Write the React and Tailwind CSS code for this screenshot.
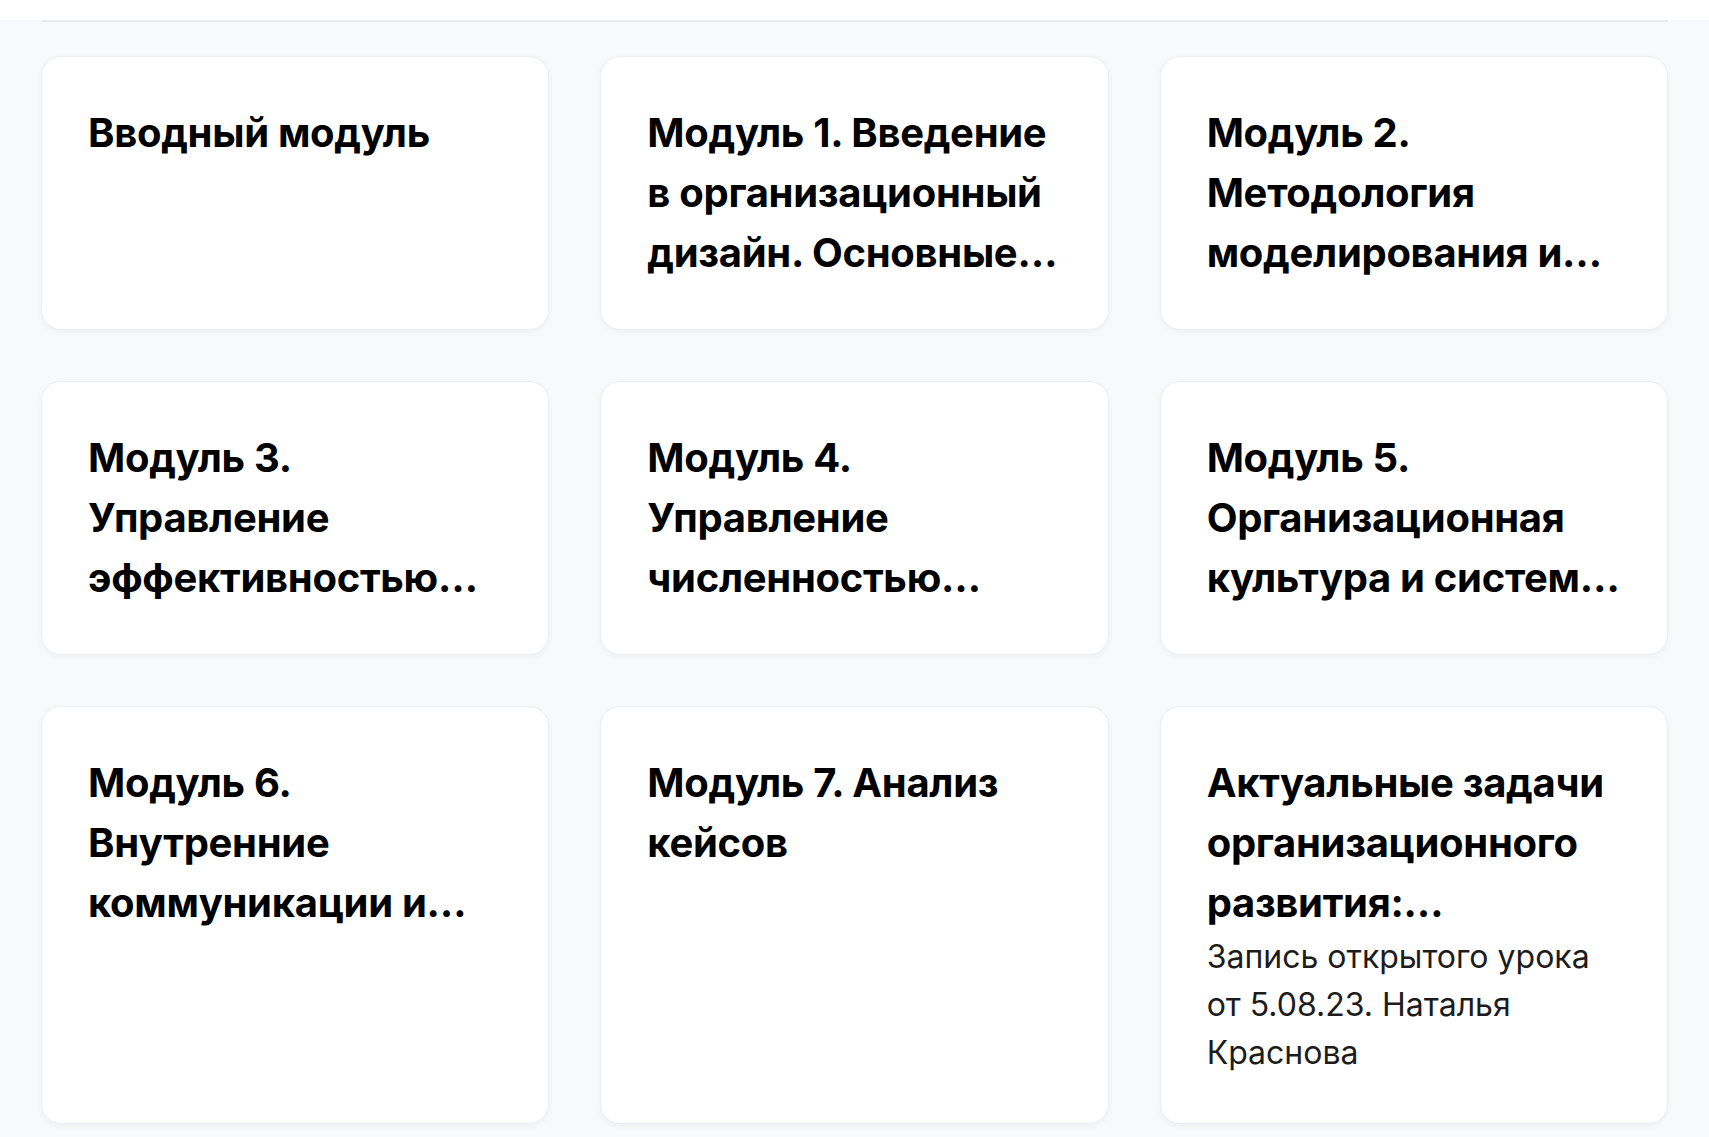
const modules = [
  { title: "Вводный модуль" },
  { title: "Модуль 1. Введение в организационный дизайн. Основные понятия" },
  { title: "Модуль 2. Методология моделирования и проектирования" },
  { title: "Модуль 3. Управление эффективностью организации" },
  { title: "Модуль 4. Управление численностью персонала" },
  { title: "Модуль 5. Организационная культура и система ценностей" },
  { title: "Модуль 6. Внутренние коммуникации и вовлеченность" },
  { title: "Модуль 7. Анализ кейсов" },
  {
    title: "Актуальные задачи организационного развития: практический взгляд",
    subtitle: "Запись открытого урока от 5.08.23. Наталья Краснова",
  },
];

function ModuleCard({ title, subtitle }) {
  return (
    <div className="bg-white rounded-[20px] border border-[#eceef2] shadow-[0_2px_6px_rgba(16,24,40,0.04)] p-[46px] cursor-pointer">
      <h3 className="text-[40px] leading-[60px] font-bold tracking-[-0.3px] text-black line-clamp-3">
        {title}
      </h3>
      {subtitle && (
        <p className="text-[32px] leading-[48px] text-[#1c1c1c]">{subtitle}</p>
      )}
    </div>
  );
}

export default function App() {
  return (
    <div
      className="min-h-screen bg-[#f8f9fb] px-[41px]"
      style={{ fontFamily: "Inter, 'Noto Sans', sans-serif" }}
    >
      <div className="h-[2px] bg-[#e9ebee] mt-[20px]" />
      <div className="grid grid-cols-3 gap-[51px] pt-[34px] pb-10">
        {modules.map((m) => (
          <ModuleCard key={m.title} {...m} />
        ))}
      </div>
    </div>
  );
}
